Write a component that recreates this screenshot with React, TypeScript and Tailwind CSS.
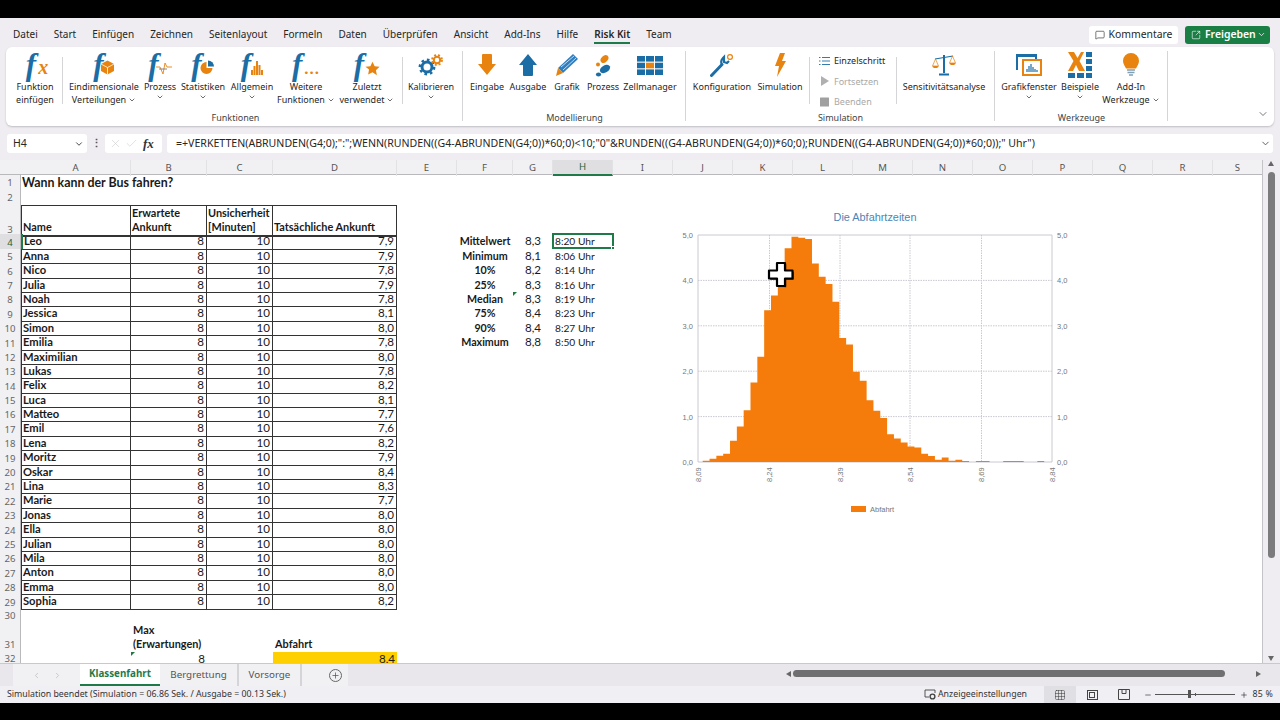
import { ReactNode } from 'react';
import { ChevronDown, ChevronLeft, ChevronRight, Check, X, MessageSquare, SquareArrowOutUpRight, Plus, Minus, Grid3x3 } from 'lucide-react';

const menu = ['Datei', 'Start', 'Einfügen', 'Zeichnen', 'Seitenlayout', 'Formeln', 'Daten', 'Überprüfen', 'Ansicht', 'Add-Ins', 'Hilfe', 'Risk Kit', 'Team'];
const columns = ['A', 'B', 'C', 'D', 'E', 'F', 'G', 'H', 'I', 'J', 'K', 'L', 'M', 'N', 'O', 'P', 'Q', 'R', 'S'];
const people: [string, string][] = [
  ['Leo', '7,9'], ['Anna', '7,9'], ['Nico', '7,8'], ['Julia', '7,9'], ['Noah', '7,8'], ['Jessica', '8,1'],
  ['Simon', '8,0'], ['Emilia', '7,8'], ['Maximilian', '8,0'], ['Lukas', '7,8'], ['Felix', '8,2'], ['Luca', '8,1'],
  ['Matteo', '7,7'], ['Emil', '7,6'], ['Lena', '8,2'], ['Moritz', '7,9'], ['Oskar', '8,4'], ['Lina', '8,3'],
  ['Marie', '7,7'], ['Jonas', '8,0'], ['Ella', '8,0'], ['Julian', '8,0'], ['Mila', '8,0'], ['Anton', '8,0'],
  ['Emma', '8,0'], ['Sophia', '8,2'],
];
const stats: [string, string, string][] = [
  ['Mittelwert', '8,3', '8:20 Uhr'], ['Minimum', '8,1', '8:06 Uhr'], ['10%', '8,2', '8:14 Uhr'], ['25%', '8,3', '8:16 Uhr'],
  ['Median', '8,3', '8:19 Uhr'], ['75%', '8,4', '8:23 Uhr'], ['90%', '8,4', '8:27 Uhr'], ['Maximum', '8,8', '8:50 Uhr'],
];
const bars = [
  .03, .07, .14, .18, .47, .78, 1.14, 1.75, 2.32, 3.34, 3.67, 3.85, 4.71, 4.96, 4.94, 4.91, 4.37, 4.08, 3.92, 3.53, 2.73, 2.59, 1.99, 1.79,
  1.36, 1.13, .97, .61, .52, .43, .34, .32, .18, .13, .05, .1, .03, .05, .02, 0, .02, .02, 0, 0, .02, .02, .02, 0, 0, .02,
];
const formula = '=+VERKETTEN(ABRUNDEN(G4;0);":";WENN(RUNDEN((G4-ABRUNDEN(G4;0))*60;0)<10;"0"&RUNDEN((G4-ABRUNDEN(G4;0))*60;0);RUNDEN((G4-ABRUNDEN(G4;0))*60;0));" Uhr")';

const gridCols = 'grid grid-cols-[21px_110px_76px_66px_124px_60px_56px_40px_60px_60px_60px_60px_60px_60px_60px_60px_60px_60px_60px_50px]';
const BLUE = '#1b6ea5';
const ORANGE = '#e8830f';

const FIcon = ({ children }: { children?: ReactNode }) => (
  <div className="flex items-center h-[30px]">
    <span className="font-['Liberation_Serif',serif] italic font-bold text-[31px] leading-[30px] text-[#1b6ea5] pr-[2px]">f</span>
    {children}
  </div>
);

const Tool = ({ w, icon, label, label2, chevron }: { w: string; icon: ReactNode; label: string; label2?: string; chevron?: boolean }) => (
  <div className={`${w} flex flex-col items-center shrink-0`}>
    <div className="h-[30px] flex items-center justify-center">{icon}</div>
    <div className="leading-[13px] whitespace-nowrap">{label}</div>
    {(label2 || chevron) && (
      <div className="leading-[13px] whitespace-nowrap flex items-center">
        {label2}
        {chevron && <ChevronDown size={8} strokeWidth={2} className={label2 ? 'ml-[2px]' : ''} />}
      </div>
    )}
  </div>
);

const InnerSep = () => <div className="w-px h-[47px] mt-[7px] bg-[#d5d5d8] shrink-0" />;

const Group = ({ w, label, children }: { w: string; label: string; children: ReactNode }) => (
  <div className={`${w} h-full flex flex-col justify-between shrink-0 relative`}>
    <div className="flex pt-[3px]">{children}</div>
    <div className="text-center leading-[13px] pb-[2px] text-[#444]">{label}</div>
    <div className="absolute right-0 top-[4px] bottom-[5px] w-px bg-[#d5d5d8]" />
  </div>
);

const Cell = ({ className = '', children }: { className?: string; children?: ReactNode }) => (
  <div className={`min-w-0 whitespace-nowrap ${className}`}>{children}</div>
);

const Triangle = () => (
  <div className="absolute left-0 top-0 w-0 h-0 border-t-[4px] border-t-[#1f7a3f] border-r-[4px] border-r-transparent" />
);

const Chart = () => {
  const x0 = 28, x1 = 382, yTop = 35, yBase = 262;
  const unit = (yBase - yTop) / 5;
  const vLines = [28, 99.5, 170, 240, 311.5, 382];
  const xLabels = ['8,09', '8,24', '8,39', '8,54', '8,69', '8,84'];
  const step = 6.83;
  const outline = bars.reduce((d, v, i) => {
    const y = yBase - v * unit;
    const x = 32.7 + i * step;
    return `${d} L${x} ${y} L${x + step} ${y}`;
  }, `M32.7 ${yBase}`) + ` L${32.7 + bars.length * step} ${yBase} Z`;
  return (
    <svg width="410" height="320" className="absolute left-[670px] top-[40px]" fontFamily="'Liberation Sans', sans-serif">
      <text x="205" y="21" textAnchor="middle" fontSize="10.9" fill="#4a86b8">Die Abfahrtzeiten</text>
      {[0, 1, 2, 3, 4, 5].map(i => {
        const y = yBase - i * unit;
        return (
          <g key={i}>
            <line x1={x0} x2={x1} y1={y} y2={y} stroke="#c9c9d2" strokeWidth="1" strokeDasharray={i === 0 || i === 5 ? undefined : '1.5 1'} />
            <text x={x0 - 5} y={y + 3} textAnchor="end" fontSize="7.5" fill="#777">{i},0</text>
            <text x={x1 + 5} y={y + 3} fontSize="7.5" fill="#777">{i},0</text>
          </g>
        );
      })}
      {vLines.map((x, i) => (
        <g key={x}>
          <line x1={x} x2={x} y1={yTop} y2={yBase} stroke="#c9c9d2" strokeWidth="1" strokeDasharray={i === 0 || i === 5 ? undefined : '1.5 1'} />
          <text transform={`translate(${x + 2.5} ${yBase + 20}) rotate(-90)`} fontSize="7.5" fill="#777">{xLabels[i]}</text>
        </g>
      ))}
      <path d={outline} fill="#f57c0a" />
      <rect x="181" y="306" width="15" height="6" fill="#f57c0a" />
      <text x="200" y="312" fontSize="7.5" fill="#777">Abfahrt</text>
    </svg>
  );
};

const CrossCursor = () => (
  <svg width="30" height="30" viewBox="0 0 30 30" className="absolute left-[766px] top-[100px]">
    <path d="M11 3h8v7.5h7.5v8H19V26h-8v-7.5H3v-8h8z" fill="#222" transform="translate(1.2 1.2)" />
    <path d="M11 3h8v7.5h7.5v8H19V26h-8v-7.5H3v-8h8z" fill="#fff" stroke="#000" strokeWidth="2.2" strokeLinejoin="round" />
  </svg>
);

export default function App() {
  return (
    <div className="w-[1280px] h-[720px] overflow-hidden bg-black flex flex-col font-['Noto_Sans',sans-serif] text-[#262626]">
      <div className="h-[18px] shrink-0" />
      <div className="h-[685px] shrink-0 bg-[#efedf2] flex flex-col">
        {/* menu row */}
        <div className="h-[29px] shrink-0 flex items-center pt-[4px] pl-[13px] pr-[10px] text-[10px]">
          <div className="flex gap-[16px]">
            {menu.map(m => (
              <div key={m} className={m === 'Risk Kit' ? 'relative font-semibold' : ''}>
                {m}
                {m === 'Risk Kit' && <div className="absolute left-0 right-0 -bottom-[2px] h-[2px] bg-[#1f7a4a]" />}
              </div>
            ))}
          </div>
          <div className="ml-auto flex gap-[7px] text-[10.4px]">
            <div className="w-[89px] h-[18px] bg-white rounded-[3px] flex items-center justify-center gap-[4px]">
              <MessageSquare size={10} strokeWidth={1.5} />
              <span>Kommentare</span>
            </div>
            <div className="w-[85px] h-[18px] bg-[#1a7f45] rounded-[3px] flex items-center pl-[6px] text-white font-semibold">
              <SquareArrowOutUpRight size={10} strokeWidth={1.5} />
              <span className="ml-[4px]">Freigeben</span>
              <ChevronDown size={9} className="ml-auto mr-[4px]" />
            </div>
          </div>
        </div>

        {/* ribbon */}
        <div className="h-[79px] shrink-0 mx-[6px] bg-white rounded-[6px] shadow-[0_1px_2px_rgba(0,0,0,0.2)] flex pl-[2px] text-[9px] relative">
          <Group w="w-[455px]" label="Funktionen">
            <Tool w="w-[54px]" label="Funktion" label2="einfügen" icon={
              <div className="ml-[4px]">
                <FIcon><span className="font-['Liberation_Serif',serif] italic font-bold text-[20px] leading-none text-[#e8830f] mt-[3px]">x</span></FIcon>
              </div>} />
            <InnerSep />
            <Tool w="w-[82px]" label="Eindimensionale" label2="Verteilungen" chevron icon={
              <FIcon>
                <svg width="15" height="15" viewBox="0 0 15 15" className="-ml-[6px] mt-[5px]">
                  <path d="M7.5 0.5 14 4v7l-6.5 3.5L1 11V4z" fill={ORANGE} />
                  <path d="M1 4l6.5 3.5L14 4M7.5 7.5v7" stroke="#fff" strokeWidth="0.8" fill="none" />
                </svg>
              </FIcon>} />
            <Tool w="w-[30px]" label="Prozess" chevron icon={
              <FIcon>
                <svg width="16" height="14" viewBox="0 0 16 14" className="-ml-[5px] mt-[5px]" fill="none" stroke={ORANGE} strokeWidth="0.9">
                  <path d="M0 6h4l3 7 2-11 2 4h5" />
                  <path d="M3 8h8" stroke="#7a7a7a" />
                </svg>
              </FIcon>} />
            <Tool w="w-[56px]" label="Statistiken" chevron icon={
              <FIcon>
                <svg width="15" height="15" viewBox="0 0 15 15" className="-ml-[4px] mt-[5px]">
                  <path d="M6.5 2a6 6 0 1 0 6 6h-6z" fill={ORANGE} />
                  <path d="M8 0.5a6 6 0 0 1 6 6H8z" fill={BLUE} />
                </svg>
              </FIcon>} />
            <Tool w="w-[42px]" label="Allgemein" chevron icon={
              <FIcon>
                <svg width="12" height="15" viewBox="0 0 12 15" className="-ml-[2px] mt-[5px]" fill={ORANGE}>
                  <rect x="0" y="10" width="2" height="5" /><rect x="2.5" y="6" width="2" height="9" />
                  <rect x="5" y="1" width="2" height="14" /><rect x="7.5" y="5" width="2" height="10" /><rect x="10" y="10" width="2" height="5" />
                </svg>
              </FIcon>} />
            <Tool w="w-[66px]" label="Weitere" label2="Funktionen" chevron icon={
              <FIcon><span className="text-[15px] font-bold leading-none text-[#e8830f] mt-[6px] tracking-[1px]">...</span></FIcon>} />
            <Tool w="w-[56px]" label="Zuletzt" label2="verwendet" chevron icon={
              <FIcon>
                <svg width="15" height="15" viewBox="0 0 24 24" className="-ml-[1px] mt-[6px]" fill={ORANGE}>
                  <path d="M12 1l3.4 7.3 7.9 1-5.8 5.4 1.5 7.9L12 18l-7 3.6 1.5-7.9L.7 9.3l7.9-1z" />
                </svg>
              </FIcon>} />
            <div className="w-[7px] shrink-0" />
            <InnerSep />
            <Tool w="w-[56px]" label="Kalibrieren" chevron icon={
              <svg width="26" height="24" viewBox="0 0 26 24" fill="none">
                <circle cx="9" cy="14" r="5" stroke={BLUE} strokeWidth="3" />
                <circle cx="9" cy="14" r="7.2" stroke={BLUE} strokeWidth="2.4" strokeDasharray="2.6 3" />
                <circle cx="19" cy="7" r="3.2" stroke={ORANGE} strokeWidth="2" />
                <circle cx="19" cy="7" r="5" stroke={ORANGE} strokeWidth="1.8" strokeDasharray="2 2" />
              </svg>} />
          </Group>
          <Group w="w-[223px]" label="Modellierung">
            <Tool w="w-[48px]" label="Eingabe" icon={
              <svg width="18" height="22" viewBox="0 0 18 22" fill={ORANGE}><path d="M5 0h8a1 1 0 0 1 1 1v9h4l-9 11-9-11h4V1a1 1 0 0 1 1-1z" /></svg>} />
            <Tool w="w-[34px]" label="Ausgabe" icon={
              <svg width="18" height="22" viewBox="0 0 18 22" fill={BLUE}><path d="M9 0l9 11h-4v10a1 1 0 0 1-1 1H5a1 1 0 0 1-1-1V11H0z" /></svg>} />
            <Tool w="w-[44px]" label="Grafik" icon={
              <svg width="24" height="24" viewBox="0 0 24 24">
                <path d="M18 1l5 5L8 20l-5-5z" fill="#2f7fc0" />
                <path d="M3 15l5 5-7 3z" fill={ORANGE} />
                <path d="M6 14L19 3M8 17L21 5" stroke="#fff" strokeWidth="0.7" />
              </svg>} />
            <Tool w="w-[28px]" label="Prozess" icon={
              <svg width="18" height="24" viewBox="0 0 18 24">
                <ellipse cx="10.5" cy="6" rx="4.5" ry="3.2" fill={ORANGE} transform="rotate(-45 10.5 6)" />
                <circle cx="4" cy="11.5" r="2" fill={ORANGE} />
                <ellipse cx="11" cy="16" rx="5.5" ry="3.6" fill={BLUE} transform="rotate(-30 11 16)" />
                <ellipse cx="4.5" cy="21.5" rx="2.6" ry="2" fill={BLUE} />
              </svg>} />
            <Tool w="w-[66px]" label="Zellmanager" icon={
              <svg width="26" height="19" viewBox="0 0 26 19">
                {[0, 1, 2].flatMap(r => [0, 1, 2].map(c => (
                  <rect key={`${r}-${c}`} x={c * 9} y={r * 6.7} width="8" height="5.6" fill={r === 1 && c === 1 ? ORANGE : BLUE} />
                )))}
              </svg>} />
          </Group>
          <Group w="w-[309px]" label="Simulation">
            <div className="flex">
              <Tool w="w-[72px]" label="Konfiguration" icon={
                <svg width="24" height="24" viewBox="0 0 24 24" fill="none">
                  <path d="M1.5 22.5L12 11.5" stroke={BLUE} strokeWidth="3" strokeLinecap="round" />
                  <path d="M12 12a6 6 0 0 1 1-7l1-1v5l3 1 2-2" stroke={BLUE} strokeWidth="2.2" />
                  <circle cx="20" cy="4" r="2.4" stroke={ORANGE} strokeWidth="1.2" />
                </svg>} />
              <Tool w="w-[44px]" label="Simulation" icon={
                <svg width="12" height="24" viewBox="0 0 12 24" fill={ORANGE}><path d="M6 0h5L8 8h4L3 24l2-11H1z" /></svg>} />
              <div className="w-[7px] shrink-0" />
              <InnerSep />
              <div className="w-[86px] shrink-0 flex flex-col pl-[9px] gap-[7px] pt-[4px] leading-[13.5px]">
                <div className="flex items-center gap-[4px]">
                  <svg width="11" height="10" viewBox="0 0 11 10" fill="none" stroke={BLUE} strokeWidth="0.9">
                    <path d="M3 1.5h8M3 5h8M3 8.5h8" /><path d="M0 1.5h1.5M0 5h1.5M0 8.5h1.5" />
                  </svg>
                  Einzelschritt
                </div>
                <div className="flex items-center gap-[4px] text-[#a9a9a9]">
                  <svg width="11" height="10" viewBox="0 0 11 10" fill="#b0b0b0"><path d="M2 0l8 5-8 5z" /></svg>
                  Fortsetzen
                </div>
                <div className="flex items-center gap-[4px] text-[#a9a9a9]">
                  <svg width="11" height="10" viewBox="0 0 11 10" fill="#a0a0a0"><rect x="1" y="0.5" width="9" height="9" rx="0.5" /></svg>
                  Beenden
                </div>
              </div>
              <InnerSep />
              <Tool w="w-[94px]" label="Sensitivitätsanalyse" icon={
                <svg width="24" height="22" viewBox="0 0 24 22" fill="none">
                  <path d="M12 1v18M7 20.5h10" stroke={BLUE} strokeWidth="2" />
                  <path d="M3 5l18-3" stroke={BLUE} strokeWidth="1.2" />
                  <path d="M3.5 5L0.5 12h6zM20.5 2l-3 7h6z" stroke={ORANGE} strokeWidth="0.7" />
                  <path d="M0.5 12a3 2 0 0 0 6 0zM17.5 9a3 2 0 0 0 6 0z" fill={ORANGE} />
                </svg>} />
            </div>
          </Group>
          <Group w="w-[173px]" label="Werkzeuge">
            <Tool w="w-[68px]" label="Grafikfenster" chevron icon={
              <svg width="26" height="24" viewBox="0 0 26 24" fill="none">
                <path d="M1 17V2h19v4" stroke={BLUE} strokeWidth="2" fill="none" />
                <rect x="1" y="1" width="19" height="3" fill={BLUE} />
                <rect x="7" y="7" width="18" height="15" fill="#fff" stroke={ORANGE} strokeWidth="2" />
                <path d="M11 19v-3M13 19v-6M15 19v-8M17 19v-5M19 19v-3M21 19v-2" stroke={BLUE} strokeWidth="1.2" />
              </svg>} />
            <Tool w="w-[34px]" label="Beispiele" chevron icon={
              <svg width="24" height="26" viewBox="0 0 24 26">
                <path d="M0 0h6l3.5 6L13 0h3L11.5 9 17 19h-6L8 13l-3 6H0l5.5-10z" fill="#e8830f" />
                <rect x="18" y="0" width="6" height="5" fill={BLUE} /><rect x="18" y="7" width="6" height="5" fill={BLUE} />
                <rect x="18" y="14" width="6" height="5" fill={BLUE} />
                <rect x="0" y="21" width="7" height="5" fill={BLUE} /><rect x="9" y="21" width="7" height="5" fill={BLUE} /><rect x="18" y="21" width="6" height="5" fill={BLUE} />
              </svg>} />
            <Tool w="w-[68px]" label="Add-In" label2="Werkzeuge" chevron icon={
              <svg width="16" height="24" viewBox="0 0 16 24">
                <path d="M8 0a8 8 0 0 1 8 8c0 3-2 5-3 7.5H3C2 13 0 11 0 8a8 8 0 0 1 8-8z" fill="#e8830f" />
                <path d="M4 17h8M4.5 19.5h7M6 22h4" stroke="#7f9fb5" strokeWidth="1.4" />
              </svg>} />
          </Group>
          <ChevronDown size={12} strokeWidth={1.6} className="absolute right-[5px] bottom-[6px] text-[#555]" />
        </div>

        {/* formula row */}
        <div className="h-[19px] mt-[8px] shrink-0 flex items-stretch pl-[7px] pr-[7px] text-[10.58px]">
          <div className="w-[80px] bg-white rounded-[3px] flex items-center justify-between pl-[6px] pr-[3px]">
            H4<ChevronDown size={10} />
          </div>
          <div className="w-[18px] flex items-center justify-center text-[#555] font-bold">⋮</div>
          <div className="w-[57px] bg-white rounded-[3px] flex items-center pl-[4px] gap-[3px] text-[#c8c8c8]">
            <X size={13} strokeWidth={1} />
            <Check size={13} strokeWidth={1} />
            <span className="ml-[2px] font-['Liberation_Serif',serif] italic font-bold text-[13px] text-[#333]">fx</span>
          </div>
          <div className="w-[5px]" />
          <div className="flex-1 bg-white rounded-[3px] flex items-center pl-[9px] pr-[2px] min-w-0">
            <span className="truncate">{formula}</span>
            <ChevronDown size={11} className="ml-auto shrink-0 text-[#555]" />
          </div>
        </div>

        {/* sheet and vertical scrollbar */}
        <div className="mt-[7px] h-[503px] shrink-0 flex">
          <div className="w-[1263px] shrink-0 relative overflow-hidden bg-white border-r border-[#c4c4c8] font-['Lato',sans-serif] text-[11.6px] text-[#1a1a1a]">
            <div className={`${gridCols} h-[15px] bg-[#f1f1f3] border-b border-[#b9b9bd] font-['Noto_Sans',sans-serif] text-[9.6px] text-[#555]`}>
              <div />
              {columns.map(c => (
                <div key={c} className={`flex items-center justify-center border-r border-[#e2e2e4] ${c === 'H' ? 'bg-[#dfdfe1] border-b-2 border-b-[#1f7a4a] text-[#1f5f3a]' : ''}`}>{c}</div>
              ))}
            </div>

            {/* rows 1 to 3 */}
            <div className={`${gridCols} h-[15px] leading-[15px]`}>
              <RowNo n={1} />
              <Cell className="pl-[1px] font-bold text-[12.4px]">Wann kann der Bus fahren?</Cell>
            </div>
            <div className={`${gridCols} h-[15px]`}><RowNo n={2} /></div>
            <div className={`${gridCols} h-[29.4px] leading-[14.4px] font-bold text-[10.9px]`}>
              <RowNo n={3} />
              <Cell className="flex items-end pl-[1px] border border-[#333] border-b-2">Name</Cell>
              <Cell className="flex items-end pl-[1px] border-y border-r border-[#333] border-b-2"><div>Erwartete<br />Ankunft</div></Cell>
              <Cell className="flex items-end pl-[1px] border-y border-r border-[#333] border-b-2"><div>Unsicherheit<br />[Minuten]</div></Cell>
              <Cell className="flex items-end pl-[1px] border-y border-r border-[#333] border-b-2">Tatsächliche Ankunft</Cell>
            </div>

            {/* rows 4 to 29 */}
            {people.map(([name, val], i) => {
              const s = stats[i];
              return (
                <div key={name} className={`${gridCols} h-[14.4px] leading-[14.4px]`}>
                  <RowNo n={i + 4} active={i === 0} />
                  <Cell className={`pl-[1px] font-bold text-[11.2px] border-x border-b border-[#333] ${i === 0 ? 'border-l-[#1f7a4a] border-l-2' : ''}`}>{name}</Cell>
                  <Cell className="pr-[2px] text-right border-r border-b border-[#333]">8</Cell>
                  <Cell className="pr-[2px] text-right border-r border-b border-[#333]">10</Cell>
                  <Cell className="pr-[2px] text-right border-r border-b border-[#333]">{val}</Cell>
                  <Cell />
                  <Cell className="text-center font-bold text-[10.7px]">{s ? s[0] : ''}</Cell>
                  <Cell className="text-center relative">
                    {s ? s[1] : ''}
                    {i === 4 && <Triangle />}
                  </Cell>
                  <Cell className="pl-[2px] relative text-[10.2px]">
                    {s ? s[2] : ''}
                    {i === 0 && (
                      <div className="absolute -left-px -top-px w-[62px] h-[16px] border-2 border-[#1f7a4a]">
                        <div className="absolute -right-[3px] -bottom-[3px] w-[4px] h-[4px] bg-[#1f7a4a] border-[0.5px] border-white" />
                      </div>
                    )}
                  </Cell>
                </div>
              );
            })}

            {/* rows 30 to 32 */}
            <div className={`${gridCols} h-[14.4px]`}><RowNo n={30} /></div>
            <div className={`${gridCols} h-[28.8px] leading-[14.4px] font-bold text-[10.9px]`}>
              <RowNo n={31} />
              <Cell />
              <Cell className="pl-[2px] flex items-end"><div>Max<br />(Erwartungen)</div></Cell>
              <Cell />
              <Cell className="pl-[2px] flex items-end">Abfahrt</Cell>
            </div>
            <div className={`${gridCols} h-[14.4px] leading-[14.4px]`}>
              <RowNo n={32} />
              <Cell />
              <Cell className="pr-[2px] text-right relative"><Triangle />8</Cell>
              <Cell />
              <Cell className="pr-[2px] text-right bg-[#ffd000]">8,4</Cell>
            </div>

            <Chart />
            <CrossCursor />
          </div>
          <div className="flex-1 relative">
            <div className="absolute left-[5px] top-[1px] w-0 h-0 border-x-[3.5px] border-x-transparent border-b-[5px] border-b-[#666]" />
            <div className="absolute left-[5px] top-[12px] w-[7px] h-[386px] rounded-[4px] bg-[#7b7b7d]" />
            <div className="absolute left-[5px] bottom-[2px] w-0 h-0 border-x-[3.5px] border-x-transparent border-t-[5px] border-t-[#666]" />
          </div>
        </div>

        {/* tabs */}
        <div className="h-[23px] shrink-0 flex items-stretch bg-[#e9e7ec] border-t border-[#c9c9cc] text-[9.8px] text-[#555]">
          <div className="w-[13px]" />
          <div className="w-[67px] bg-[#f1f1f3] flex items-center justify-center gap-[12px] text-[#bbb]">
            <ChevronLeft size={9} /><ChevronRight size={9} />
          </div>
          <div className="w-[80px] bg-white border-b-2 border-[#1f7a4a] flex items-center justify-center font-bold text-[#1f7a4a]">Klassenfahrt</div>
          <div className="w-[79px] bg-[#f1f1f3] border-r-2 border-[#d5d5d8] flex items-center justify-center">Bergrettung</div>
          <div className="w-[63px] bg-[#f1f1f3] border-r-2 border-[#d5d5d8] flex items-center justify-center">Vorsorge</div>
          <div className="w-[46px] bg-[#f1f1f3] flex items-center justify-end pr-[6px]">
            <div className="w-[13px] h-[13px] rounded-full border border-[#666] flex items-center justify-center text-[#555]"><Plus size={9} /></div>
          </div>
          <div className="w-[438px]" />
          <div className="flex-1 relative">
            <div className="absolute left-0 top-[7px] w-0 h-0 border-y-[3.5px] border-y-transparent border-r-[5px] border-r-[#666]" />
            <div className="absolute left-[7px] top-[6px] w-[432px] h-[7px] rounded-[4px] bg-[#6f6f71]" />
            <div className="absolute right-[19px] top-[7px] w-0 h-0 border-y-[3.5px] border-y-transparent border-l-[5px] border-l-[#666]" />
          </div>
        </div>

        {/* status bar */}
        <div className="h-[17px] shrink-0 flex items-center pl-[7px] text-[8.8px] text-[#333] bg-[#f0eff3]">
          <span>Simulation beendet (Simulation = 06.86 Sek. / Ausgabe = 00.13 Sek.)</span>
          <div className="ml-auto flex items-center h-full">
            <svg width="12" height="11" viewBox="0 0 12 11" fill="none" stroke="#444" strokeWidth="0.9" className="mr-[2px]">
              <path d="M5 8H1V1h10v3" /><circle cx="8.5" cy="7.5" r="2.4" strokeWidth="1.4" />
            </svg>
            <span className="w-[106px]">Anzeigeeinstellungen</span>
            <div className="w-[32px] h-full bg-[#e0dfe3] flex items-center justify-center"><Grid3x3 size={12} strokeWidth={1} /></div>
            <div className="w-[32px] flex items-center justify-center">
              <div className="w-[11px] h-[10px] border border-[#444] flex items-center justify-center"><div className="w-[6px] h-[6px] border border-[#444]" /></div>
            </div>
            <div className="w-[32px] flex items-center justify-center">
              <svg width="12" height="11" viewBox="0 0 12 11" fill="none" stroke="#444" strokeWidth="1"><path d="M.5.5h11v10H.5zM4 .5v4h4v-4" /></svg>
            </div>
            <Minus size={8} className="ml-[4px]" />
            <div className="w-[80px] h-px bg-[#555] relative ml-[3px] mr-[5px]">
              <div className="absolute left-[33px] -top-[4px] w-[3px] h-[8px] bg-[#555]" />
              <div className="absolute left-[40px] -top-[1px] w-px h-[3px] bg-[#555]" />
            </div>
            <Plus size={8} />
            <span className="w-[32px] text-right pr-[7px] tracking-[0.2px]">85 %</span>
          </div>
        </div>
      </div>
      <div className="flex-1" />
    </div>
  );
}

function RowNo({ n, active }: { n: number; active?: boolean }) {
  return (
    <div className={`h-full flex items-end justify-center font-['Noto_Sans',sans-serif] font-normal text-[9.6px] leading-[14px] border-r border-[#b9b9bd] ${active ? 'bg-[#dfdfe1] text-[#1f5f3a]' : 'bg-[#f1f1f3] text-[#666]'}`}>
      {n}
    </div>
  );
}
